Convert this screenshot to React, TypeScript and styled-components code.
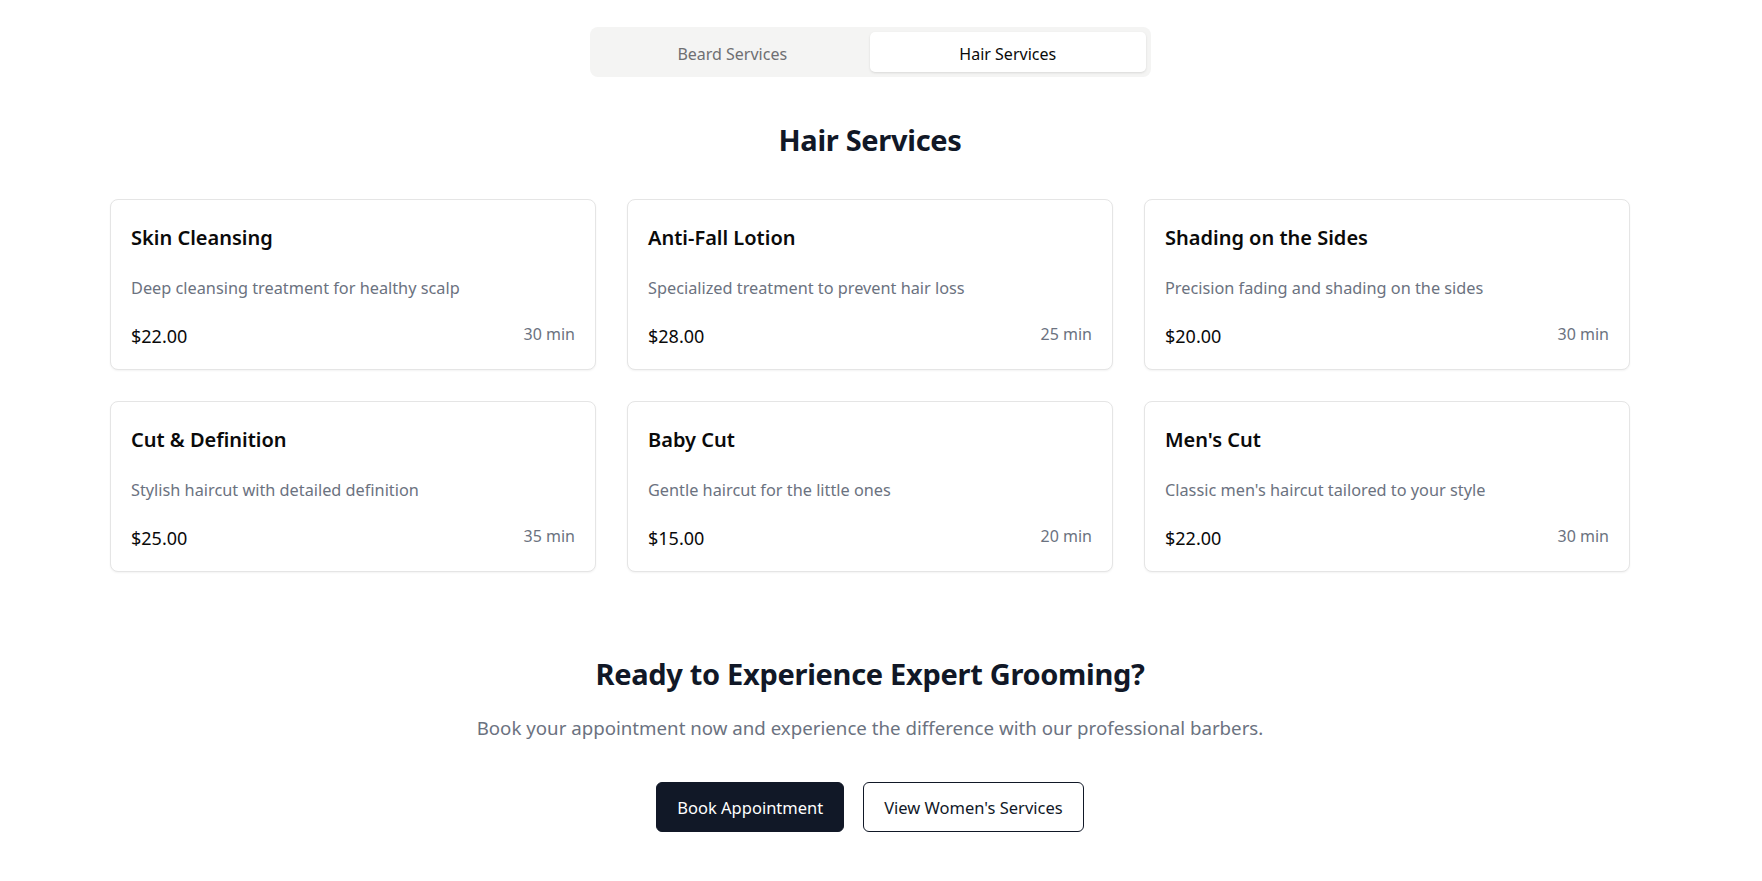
import React, { useState } from "react";
import styled, { createGlobalStyle, css } from "styled-components";

const GlobalStyle = createGlobalStyle`
  html, body {
    margin: 0;
    padding: 0;
    background: #ffffff;
  }
  body {
    font-family: "Noto Sans", "Open Sans", Arial, sans-serif;
    color: #0a0a0a;
    -webkit-font-smoothing: antialiased;
  }
  * { box-sizing: border-box; }
`;

const Page = styled.main`
  width: 1520px;
  margin-left: 110px;
  display: flex;
  flex-direction: column;
  align-items: center;
  padding-top: 27px;
  padding-bottom: 48px;
`;

const TabList = styled.div`
  width: 561px;
  height: 50px;
  padding: 5px;
  background: #f4f4f3;
  border-radius: 8px;
  display: grid;
  grid-template-columns: 1fr 1fr;
`;

const Tab = styled.button<{ $active?: boolean }>`
  border: none;
  border-radius: 5px;
  padding: 3px 0 0;
  font-family: inherit;
  font-size: 16px;
  line-height: 24px;
  cursor: pointer;
  background: transparent;
  color: #6f6f72;
  ${(p) =>
    p.$active &&
    css`
      background: #ffffff;
      color: #0a0a0a;
      box-shadow: 0 1px 3px rgba(0, 0, 0, 0.08), 0 1px 2px rgba(0, 0, 0, 0.04);
    `}
`;

const SectionTitle = styled.h2`
  margin: 45px 0 41px;
  font-size: 29px;
  letter-spacing: -0.3px;
  line-height: 36px;
  font-weight: 700;
  color: #111827;
`;

const Grid = styled.div`
  width: 100%;
  display: grid;
  grid-template-columns: repeat(3, 1fr);
  gap: 31px 31px;
`;

const Card = styled.div`
  background: #fff;
  border: 1px solid #e5e5e5;
  border-radius: 8px;
  box-shadow: 0 1px 2px rgba(0, 0, 0, 0.05);
  padding: 24px 20px 19px;
  display: flex;
  flex-direction: column;
`;

const CardTitle = styled.h3`
  margin: 0 0 24px;
  font-size: 20px;
  line-height: 28px;
  font-weight: 600;
  color: #0a0a0a;
`;

const CardDesc = styled.p`
  margin: 0 0 22px;
  font-size: 16.3px;
  line-height: 24px;
  color: #6b7280;
`;

const CardFooter = styled.div`
  display: flex;
  justify-content: space-between;
`;

const Price = styled.span`
  font-size: 18px;
  line-height: 28px;
  color: #0a0a0a;
`;

const Duration = styled.span`
  font-size: 16px;
  line-height: 24px;
  color: #6b7280;
`;

const Cta = styled.section`
  margin-top: 84px;
  display: flex;
  flex-direction: column;
  align-items: center;
`;

const CtaTitle = styled.h2`
  margin: 0 0 22px;
  font-size: 29px;
  letter-spacing: -0.3px;
  line-height: 36px;
  font-weight: 700;
  color: #111827;
`;

const CtaText = styled.p`
  margin: 0 0 40px;
  font-size: 18.7px;
  line-height: 28px;
  color: #6b7280;
`;

const ButtonRow = styled.div`
  display: flex;
  gap: 19px;
`;

const Button = styled.button<{ $variant?: "solid" | "outline" }>`
  height: 50px;
  padding: 0 20px;
  border-radius: 6px;
  font-family: inherit;
  font-size: 16.5px;
  cursor: pointer;
  ${(p) =>
    p.$variant === "outline"
      ? css`
          background: #ffffff;
          color: #111827;
          border: 1px solid #111827;
        `
      : css`
          background: #111827;
          color: #ffffff;
          border: 1px solid #111827;
        `}
`;

type Service = { name: string; desc: string; price: string; duration: string };

const hairServices: Service[] = [
  { name: "Skin Cleansing", desc: "Deep cleansing treatment for healthy scalp", price: "$22.00", duration: "30 min" },
  { name: "Anti-Fall Lotion", desc: "Specialized treatment to prevent hair loss", price: "$28.00", duration: "25 min" },
  { name: "Shading on the Sides", desc: "Precision fading and shading on the sides", price: "$20.00", duration: "30 min" },
  { name: "Cut & Definition", desc: "Stylish haircut with detailed definition", price: "$25.00", duration: "35 min" },
  { name: "Baby Cut", desc: "Gentle haircut for the little ones", price: "$15.00", duration: "20 min" },
  { name: "Men's Cut", desc: "Classic men's haircut tailored to your style", price: "$22.00", duration: "30 min" },
];

const beardServices: Service[] = [
  { name: "Beard Trim", desc: "Shape and trim for a clean look", price: "$15.00", duration: "20 min" },
  { name: "Hot Towel Shave", desc: "Traditional shave with hot towel treatment", price: "$25.00", duration: "30 min" },
  { name: "Beard Styling", desc: "Full beard sculpting and styling", price: "$20.00", duration: "25 min" },
];

export default function App() {
  const [tab, setTab] = useState<"beard" | "hair">("hair");
  const services = tab === "hair" ? hairServices : beardServices;
  return (
    <>
      <GlobalStyle />
      <Page>
        <TabList>
          <Tab $active={tab === "beard"} onClick={() => setTab("beard")}>
            Beard Services
          </Tab>
          <Tab $active={tab === "hair"} onClick={() => setTab("hair")}>
            Hair Services
          </Tab>
        </TabList>
        <SectionTitle>{tab === "hair" ? "Hair Services" : "Beard Services"}</SectionTitle>
        <Grid>
          {services.map((s) => (
            <Card key={s.name}>
              <CardTitle>{s.name}</CardTitle>
              <CardDesc>{s.desc}</CardDesc>
              <CardFooter>
                <Price>{s.price}</Price>
                <Duration>{s.duration}</Duration>
              </CardFooter>
            </Card>
          ))}
        </Grid>
        <Cta>
          <CtaTitle>Ready to Experience Expert Grooming?</CtaTitle>
          <CtaText>Book your appointment now and experience the difference with our professional barbers.</CtaText>
          <ButtonRow>
            <Button $variant="solid">Book Appointment</Button>
            <Button $variant="outline">View Women's Services</Button>
          </ButtonRow>
        </Cta>
      </Page>
    </>
  );
}
